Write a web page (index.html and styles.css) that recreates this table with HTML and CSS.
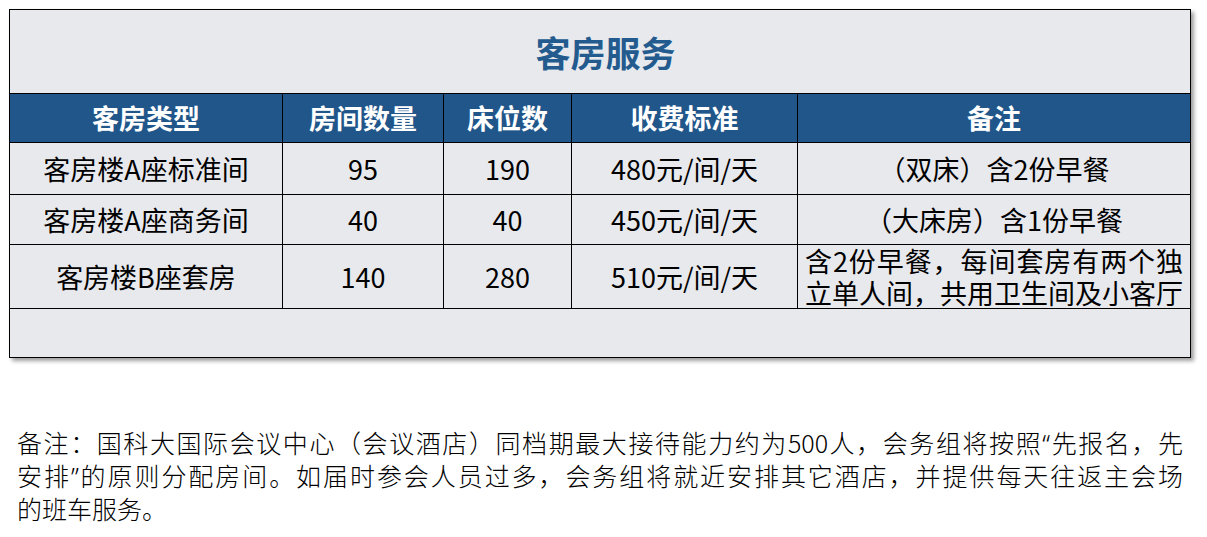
FILE: index.html
```html
<!DOCTYPE html>
<html lang="zh-CN">
<head>
<meta charset="utf-8">
<title>客房服务</title>
<link rel="stylesheet" href="styles.css">
</head>
<body>
<div class="sheet">
  <div class="title">客房服务</div>
  <div class="grid">
    <div class="cell head">客房类型</div>
    <div class="cell head">房间数量</div>
    <div class="cell head">床位数</div>
    <div class="cell head">收费标准</div>
    <div class="cell head last">备注</div>

    <div class="cell">客房楼A座标准间</div>
    <div class="cell">95</div>
    <div class="cell">190</div>
    <div class="cell">480元/间/天</div>
    <div class="cell last">（双床）含2份早餐</div>

    <div class="cell">客房楼A座商务间</div>
    <div class="cell">40</div>
    <div class="cell">40</div>
    <div class="cell">450元/间/天</div>
    <div class="cell last">（大床房）含1份早餐</div>

    <div class="cell">客房楼B座套房</div>
    <div class="cell">140</div>
    <div class="cell">280</div>
    <div class="cell">510元/间/天</div>
    <div class="cell last multi">
      <span class="mline">含2份早餐，每间套房有两个独</span>
      <span class="mline">立单人间，共用卫生间及小客厅</span>
    </div>
  </div>
  <div class="foot"></div>
</div>
<p class="note">
  <span class="nline">备注：国科大国际会议中心（会议酒店）同档期最大接待能力约为500人，会务组将按照<span class="q">“</span>先报名，先</span>
  <span class="nline">安排<span class="q">”</span>的原则分配房间。如届时参会人员过多，会务组将就近安排其它酒店，并提供每天往返主会场</span>
  <span class="nline end">的班车服务。</span>
</p>
</body>
</html>
```
FILE: styles.css
```css
html, body {
  margin: 0;
  background: #ffffff;
}
body {
  padding: 9px 0 0 9px;
  font-family: "Noto Sans CJK SC", "Noto Sans", sans-serif;
  color: #000;
}
.sheet {
  width: 1182px;
  box-sizing: border-box;
  border: 1px solid #000;
  background: #e8e9ed;
  box-shadow: 3px 3px 4px rgba(0, 0, 0, 0.38);
}
.title {
  height: 84px;
  box-sizing: border-box;
  border-bottom: 1px solid #000;
  display: flex;
  align-items: center;
  justify-content: center;
  padding-left: 11px;
  font-size: 35px;
  font-weight: 700;
  color: #245b8e;
}
.grid {
  display: grid;
  grid-template-columns: 273px 161px 128px 226px 392px;
  grid-template-rows: 49px 52px 50px 64px;
}
.cell {
  box-sizing: border-box;
  border-right: 1px solid #000;
  border-bottom: 1px solid #000;
  display: flex;
  align-items: center;
  justify-content: center;
  font-size: 27px;
  line-height: 32px;
  white-space: nowrap;
}
.cell.last {
  border-right: none;
}
.head {
  background: #21568a;
  color: #ffffff;
  font-weight: 700;
  font-size: 27px;
}
.multi {
  flex-direction: column;
  align-items: stretch;
  padding: 0 7px;
  line-height: 31.5px;
}
.mline {
  display: block;
  text-align: justify;
  text-align-last: justify;
}
.foot {
  height: 48px;
}
.note {
  margin: 68px 0 0 8px;
  width: 1166px;
  font-size: 25px;
  line-height: 32px;
  font-weight: 300;
}
.nline {
  display: block;
  white-space: nowrap;
  text-align: justify;
  text-align-last: justify;
}
.nline.end {
  text-align-last: left;
}
.q {
  font-family: "Noto Sans", sans-serif;
}
```
